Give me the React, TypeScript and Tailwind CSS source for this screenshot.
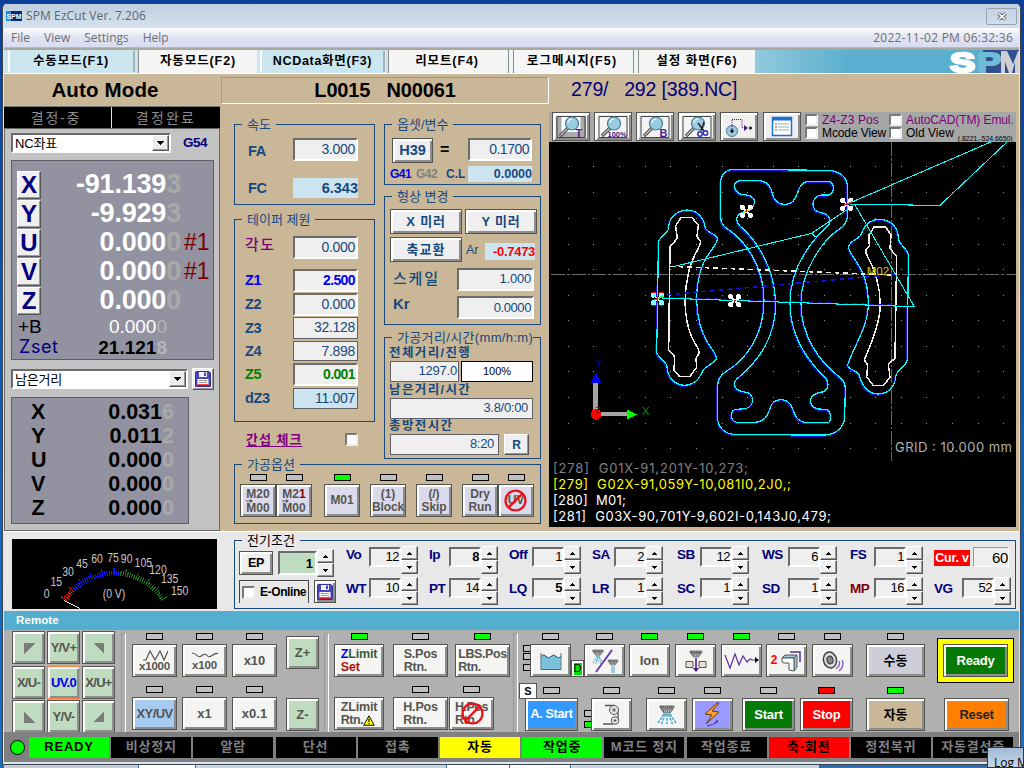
import React from "react";

type Kids = { children?: React.ReactNode; className?: string };

const bevel = "border border-[#55554f] shadow-[inset_2px_2px_0_#fff,inset_-2px_-2px_0_#8d8d8d]";
const sunken = "border-2 border-t-[#6b6b6b] border-l-[#6b6b6b] border-r-white border-b-white";
const flat = "border border-[#606066]";
const raised = "border border-t-white border-l-white border-r-[#555] border-b-[#555] shadow-[inset_-1px_-1px_0_#999]";

function Btn({ children, className = "" }: Kids) {
  return <div className={`flex shrink-0 items-center justify-center overflow-hidden ${bevel} ${className}`}>{children}</div>;
}

function Led({ className = "bg-[#c0c0c0]" }: { className?: string }) {
  return <div className={`h-[7px] w-[17px] shrink-0 border border-black ${className}`} />;
}

function Val({ children, className = "" }: Kids) {
  return <div className={`flex shrink-0 items-center justify-end ${className}`}>{children}</div>;
}

function Group({ title, children, className = "", legend = "bg-[#cab797] text-[#17497f]" }: Kids & { title: string; legend?: string }) {
  return (
    <div className={`flex shrink-0 flex-col border border-[#17497f] ${className}`}>
      <div className={`-mt-[9px] ml-[7px] flex h-[17px] shrink-0 items-center self-start px-[5px] text-[13px] ${legend}`}>{title}</div>
      {children}
    </div>
  );
}

function Check({ className = "" }: { className?: string }) {
  return <div className={`h-[13px] w-[13px] shrink-0 border-2 border-t-[#777] border-l-[#777] border-r-[#eee] border-b-[#eee] bg-white ${className}`} />;
}

function Spinner() {
  return (
    <div className="flex h-[28px] w-[17px] shrink-0 flex-col">
      <div className={`flex h-[14px] items-center justify-center bg-[#efefef] ${raised}`}>
        <svg width="5" height="3" shapeRendering="crispEdges"><path d="M0 3h5L2.5 0z" /></svg>
      </div>
      <div className={`flex h-[14px] items-center justify-center bg-[#efefef] ${raised}`}>
        <svg width="5" height="3" shapeRendering="crispEdges"><path d="M0 0h5L2.5 3z" /></svg>
      </div>
    </div>
  );
}

function Disk() {
  return (
    <svg width="16" height="16" viewBox="0 0 16 16">
      <path d="M1 .5h13l1.5 1.5v13.5h-15V1z" fill="#4848b8" stroke="#34348c" />
      <path d="M4 1h8v5H4z" fill="#f2f2fa" /><path d="M9 1.5h2v3.5H9z" fill="#4848b8" />
      <path d="M2.5 8h11v6h-11z" fill="#fff" /><path d="M4 9.5h8M4 11.5h8" stroke="#999" />
      <path d="M2.5 14h11" stroke="#f00" strokeWidth="1.5" />
    </svg>
  );
}

function Select({ text, className = "" }: { text: string; className?: string }) {
  return (
    <div className={`flex h-[20px] shrink-0 items-center justify-between bg-white pl-[2px] text-[13px] ${sunken} ${className}`}>
      <span className="tracking-[-0.2px]">{text}</span>
      <div className={`flex h-[16px] w-[17px] items-center justify-center bg-[#ececec] ${raised}`}>
        <svg width="7" height="4" shapeRendering="crispEdges"><path d="M0 0h7L3.5 4z" /></svg>
      </div>
    </div>
  );
}

function TitleBar() {
  return (
    <div className="flex h-[24px] shrink-0 items-center justify-between bg-linear-to-b from-[#bfcfde] to-[#d5e2ef] pr-[2px] pl-[2px] text-[#5c6570]">
      <div className="flex items-center">
        <svg width="16" height="10" viewBox="0 0 16 10">
          <path d="M0 0h5v10H0z" fill="#1b8fe0" /><path d="M5 0h11v10H5z" fill="#08287c" />
          <text x="0.5" y="8" fontSize="8" fontWeight="700" fill="#fff" textLength="15" lengthAdjust="spacingAndGlyphs">SPM</text>
        </svg>
        <span className="ml-[4px] font-['Open_Sans',sans-serif] text-[12px] tracking-[0.1px]">SPM EzCut Ver. 7.206</span>
      </div>
      <div className="flex h-[17px] w-[31px] items-center justify-center rounded-[2px] border border-[#98a4b2]">
        <svg width="12" height="9" viewBox="0 0 12 9">
          <path d="M2.5 1.5l7 6M9.5 1.5l-7 6" stroke="#555a63" strokeWidth="3.6" />
          <path d="M2.7 1.7l6.6 5.6M9.3 1.7L2.7 7.3" stroke="#fff" strokeWidth="1.6" />
        </svg>
      </div>
    </div>
  );
}

function Tabs() {
  return (
    <div className="flex h-[26px] shrink-0 border-t-2 border-b border-t-[#a8a8a0] border-b-white bg-[#eef5f7] text-[12.5px] font-bold text-black">
      <div className="flex w-[134px] items-center justify-center bg-[#cce6ef]">
        <div className="flex h-[21px] w-[127px] items-center justify-center border-x-2 border-l-white border-r-[#a6b4b8]">
          <span className="tracking-[0.9px]">수동모드(F1)</span>
        </div>
      </div>
      <div className="flex w-[116px] items-center justify-center border-l border-[#8a8a8a] bg-[#f5f5f5] pl-[3px] tracking-[0.9px]">자동모드(F2)</div>
      <div className="ml-[3px] flex w-[131px] items-center justify-center bg-[#cce6ef]">
        <div className="flex h-[21px] w-[125px] items-center justify-center border-x-2 border-l-white border-r-[#a6b4b8]">
          <span className="tracking-[0.7px]">NCData화면(F3)</span>
        </div>
      </div>
      <div className="flex w-[117px] items-center justify-center border-l border-[#8a8a8a] bg-[#f5f5f5] tracking-[0.9px]">리모트(F4)</div>
      <div className="ml-[3px] w-[4px] border-l border-[#8a8a8a]" />
      <div className="ml-px flex w-[117px] items-center justify-center border-l border-[#8a8a8a] bg-[#f5f5f5] tracking-[1.1px]">로그메시지(F5)</div>
      <div className="ml-[3px] w-[4px] border-l border-[#8a8a8a]" />
      <div className="ml-px flex w-[117px] items-center justify-center border-l border-[#8a8a8a] bg-[#f5f5f5] tracking-[1px]">설정 화면(F6)</div>
      <div className="flex flex-1 justify-end overflow-hidden bg-linear-to-r from-[#92c9dd] via-[#5bafce] via-35% to-[#5bafce]">
        <svg width="70" height="23" viewBox="949 50 70 23">
          <path d="M983 50h40v23h-46l8-8z" fill="#2f4f8e" />
          <text x="950" y="71.5" fontSize="27" fontWeight="900" fill="#fff" stroke="#fff" strokeWidth="2.4" textLength="25" lengthAdjust="spacingAndGlyphs">S</text>
          <text x="977" y="71.500" fontSize="27" fontWeight="900" fill="#6fbbd8" stroke="#6fbbd8" strokeWidth="2" textLength="24" lengthAdjust="spacingAndGlyphs">P</text>
          <path d="M1001 73V51h6l6 13 5-13h2v22h-5V62l-3 11h-3l-4-11v11z" fill="#cfcfd4" />
        </svg>
      </div>
    </div>
  );
}

const axes = [
  ["X", "-91.139", "3", ""],
  ["Y", "-9.929", "3", ""],
  ["U", "0.000", "0", "#1"],
  ["V", "0.000", "0", "#1"],
  ["Z", "0.000", "0", ""],
];
const remains = [["X", "0.031", "6"], ["Y", "0.011", "2"], ["U", "0.000", "0"], ["V", "0.000", "0"], ["Z", "0.000", "0"]];

function LeftColumn() {
  return (
    <div className="flex w-[216px] shrink-0 flex-col">
      <div className="flex h-[32px] shrink-0 items-center justify-center pr-[14px] text-[20.5px] font-bold tracking-[0.15px]">Auto Mode</div>
      <div className="flex h-[22px] shrink-0 gap-px border-t border-[#777] bg-[#ddd] text-[14px] text-[#8c8c8c]">
        <div className="flex w-[107px] items-center justify-center bg-black pr-[3px] tracking-[1.8px]">결정-중</div>
        <div className="flex flex-1 items-center justify-center bg-black tracking-[2.2px]">결정완료</div>
      </div>
      <div className="flex h-[403px] shrink-0 flex-col border border-[#666] bg-[#c3c3c3] pl-[6px]">
        <div className="mt-[4px] flex h-[20px] shrink-0 items-center">
          <Select text="NC좌표" className="w-[160px]" />
          <span className="ml-[12px] text-[13.5px] font-bold tracking-[-0.5px] text-[#00007f]">G54</span>
        </div>
        <div className="mt-[7px] flex h-[200px] w-[203px] shrink-0 flex-col border border-[#5c5c64] bg-[#9292a1] pt-[9px]">
          {axes.map(([n, v, d, s]) => (
            <div key={n} className="flex h-[29px] shrink-0 items-center">
              <div className={`ml-[5px] flex h-[28px] w-[24px] shrink-0 items-center justify-center bg-[#efefef] pt-px text-[24px] font-bold text-[#00007f] ${raised}`}>{n}</div>
              <span className="w-[140px] text-right text-[27px] font-bold tracking-[-0.2px] text-white">
                {v}<span className="text-[#a9a9a9]">{d}</span>
              </span>
              <span className="ml-[3px] text-[23px] text-[#7f0000]">{s}</span>
            </div>
          ))}
          <div className="mt-px flex h-[21px] items-center pl-[6px] text-[19px]">
            <span>+B</span>
            <span className="ml-auto pr-[46px] text-white">0.000<span className="text-[#b5b5b9]">0</span></span>
          </div>
          <div className="flex h-[20px] items-center pl-[7px] text-[19px]">
            <span className="font-['Inter',sans-serif] text-[18px] tracking-[0.6px] text-[#00007f]">Zset</span>
            <span className="ml-auto pr-[46px] font-bold">21.121<span className="text-[#b5b5b9]">8</span></span>
          </div>
        </div>
        <div className="mt-[8px] flex h-[22px] shrink-0 items-center">
          <Select text="남은거리" className="w-[177px]" />
          <div className={`ml-[4px] flex h-[22px] w-[22px] items-center justify-center bg-[#efefef] ${raised}`}><Disk /></div>
        </div>
        <div className="mt-[7px] flex h-[127px] w-[178px] shrink-0 flex-col border border-[#5c5c64] bg-[#9292a1] pt-[3px]">
          {remains.map(([n, v, d]) => (
            <div key={n} className="flex h-[24px] shrink-0 items-center justify-between pr-[14px] pl-[19px] text-[21.500px] font-bold">
              <span className="w-[14px] text-center">{n}</span>
              <span>{v}<span className="text-[#a9a9a9]">{d}</span></span>
            </div>
          ))}
        </div>
      </div>
    </div>
  );
}

function TaperRow({ label, value, row, field, color = "text-[#17497f]" }: { label: string; value: string; row: string; field: string; color?: string }) {
  return (
    <div className={`flex shrink-0 items-center ${row} ${color}`}>
      <span className="ml-[10px] w-[48px] text-[14.5px] font-bold tracking-[-0.3px]">{label}</span>
      <Val className={`h-full w-[65px] text-[14px] tracking-[-0.3px] ${field}`}>{value}</Val>
    </div>
  );
}

function Opt({ led, children, className = "" }: Kids & { led?: string }) {
  return (
    <div className="flex shrink-0 flex-col items-center">
      <Led className={led} />
      <Btn className={`mt-[3px] h-[33px] w-[36px] bg-[#dadaec] text-center text-[12px] leading-[13px] font-bold tracking-[-0.1px] text-[#55554f] ${className}`}>{children}</Btn>
    </div>
  );
}

function MSwap({ children }: Kids) {
  return (
    <span className="flex flex-col items-start text-[12px] leading-[10px] tracking-[0px]">
      <span>{children}</span>
      <svg width="8" height="4" viewBox="0 0 8 4"><path d="M0 2h5" stroke="#55554f" /><path d="M4 0l3 2-3 2z" fill="#55554f" /></svg>
      <span>M00</span>
    </span>
  );
}

function Ban({ size }: { size: number }) {
  return (
    <svg width={size} height={size} viewBox="0 0 24 24" fill="none" stroke="#e8141c" strokeWidth="2.4">
      <circle cx="12" cy="12" r="10.4" /><path d="M4.8 19.2L19.2 4.8" />
    </svg>
  );
}

function Params() {
  return (
    <div className="flex w-[329px] shrink-0 flex-col pl-[14px]">
      <div className="mt-[19px] flex h-[335px] shrink-0">
        <div className="flex w-[141px] shrink-0 flex-col">
          <Group title="속도" className="h-[81px]">
            <div className="mt-[5px] flex h-[23px] items-center text-[#17497f]">
              <span className="ml-[13px] w-[45px] pt-[3px] text-[14.5px] font-bold tracking-[-0.3px]">FA</span>
              <Val className={`h-full w-[65px] bg-[#efefef] pr-[1px] pb-[2px] text-[14px] tracking-[-0.3px] ${sunken}`}>3.000</Val>
            </div>
            <div className="mt-[17px] flex h-[20px] items-center text-[#17497f]">
              <span className="ml-[13px] w-[45px] text-[14.5px] font-bold tracking-[-0.3px]">FC</span>
              <Val className="h-full w-[65px] bg-[#cde5f0] text-[14.500px] font-bold">6.343</Val>
            </div>
          </Group>
          <Group title="테이퍼 제원" className="mt-[14px] h-[203px]">
            <div className="mt-[8px] flex h-[23px] shrink-0 items-center">
              <span className="ml-[10px] w-[48px] pb-[6px] text-[15px] font-medium tracking-[1.5px] text-[#7f007f]">각도</span>
              <Val className={`h-full w-[65px] bg-[#efefef] pr-[1px] pb-[2px] text-[14px] tracking-[-0.3px] text-[#17497f] ${sunken}`}>0.000</Val>
            </div>
            <TaperRow label="Z1" value="2.500" row="mt-[10px] h-[23px]" field={`bg-[#efefef] pr-[1px] pb-[2px] font-bold tracking-[-0.6px]! ${sunken}`} color="text-[#0000f0]" />
            <TaperRow label="Z2" value="0.000" row="mt-px h-[23px]" field={`bg-[#efefef] pr-[1px] pb-[2px] ${sunken}`} />
            <TaperRow label="Z3" value="32.128" row="mt-px h-[22px]" field={`bg-[#efefef] pr-[2px] pb-[2px] ${flat}`} />
            <TaperRow label="Z4" value="7.898" row="mt-[2px] h-[20px]" field={`bg-[#efefef] pr-[2px] pb-px ${flat}`} />
            <TaperRow label="Z5" value="0.001" row="mt-[2px] h-[23px]" field={`bg-[#efefef] pr-[1px] pb-px font-bold tracking-[-0.6px]! ${sunken}`} color="text-[#007f00]" />
            <TaperRow label="dZ3" value="11.007" row="mt-[2px] h-[21px]" field={`bg-[#cde5f0] pr-[2px] pb-px ${flat}`} />
          </Group>
          <div className="mt-[9px] flex h-[16px] items-center justify-between pr-[17px] pl-[12px]">
            <span className="text-[13px] font-bold tracking-[1px] text-[#7f007f] underline underline-offset-[2px]">간섭 체크</span>
            <Check />
          </div>
        </div>
        <div className="ml-[9px] flex w-[157px] shrink-0 flex-col text-[#17497f]">
          <Group title="옵셋/변수" className="h-[61px]">
            <div className="mt-[5px] flex h-[25px] shrink-0 items-start">
              <Btn className="ml-[7px] h-[25px] w-[41px] bg-[#efefef] text-[14.500px] font-bold">H39</Btn>
              <span className="ml-[7px] w-[28px] pt-[4px] text-[16px] font-bold text-black">=</span>
              <Val className={`h-[23px] w-[64px] bg-[#efefef] pr-[1px] pb-[2px] text-[14px] tracking-[-0.500px] ${sunken}`}>0.1700</Val>
            </div>
            <div className="mt-[3px] flex h-[16px] shrink-0 items-center pl-[5px] text-[12px] font-bold">
              <span className="w-[26px] tracking-[-0.5px] text-[#0000f0]">G41</span>
              <span className="w-[30px] tracking-[-0.5px] text-[#808080]">G42</span>
              <span className="w-[22px]">C.L</span>
              <Val className="h-full w-[64px] bg-[#cde5f0] text-[12.5px]">0.0000</Val>
            </div>
          </Group>
          <Group title="형상 변경" className="mt-[11px] h-[129px]">
            <div className="mt-[4px] flex h-[25px] shrink-0 gap-[3px] pl-[5px]">
              <Btn className="h-[25px] w-[72px] bg-[#efefef] pb-px text-[13px] font-bold tracking-[0.8px]">X 미러</Btn>
              <Btn className="h-[25px] w-[72px] bg-[#efefef] pb-px text-[13px] font-bold tracking-[0.8px]">Y 미러</Btn>
            </div>
            <div className="mt-[3px] flex h-[25px] shrink-0 items-center pl-[5px]">
              <Btn className="h-[25px] w-[72px] bg-[#efefef] pb-px text-[13px] font-bold tracking-[1px]">축교환</Btn>
              <span className="ml-[4px] w-[19px] pt-[2px] text-[12.500px]">Ar</span>
              <Val className="mt-[3px] h-[17px] w-[50px] bg-[#cde5f0] text-[13px] font-bold tracking-[-0.3px] text-[#f00]">-0.7473</Val>
            </div>
            <div className="mt-[6px] flex h-[23px] shrink-0 items-center">
              <span className="ml-[8px] w-[64px] pb-[3px] text-[15px] font-medium tracking-[1.800px]">스케일</span>
              <Val className={`h-full w-[77px] bg-[#efefef] pr-[1px] pb-[2px] text-[13px] tracking-[-0.2px] ${sunken}`}>1.000</Val>
            </div>
            <div className="mt-[5px] flex h-[23px] shrink-0 items-center">
              <span className="ml-[8px] w-[64px] pb-[8px] text-[15px] font-bold">Kr</span>
              <Val className={`h-full w-[77px] bg-[#efefef] pr-[1px] pb-[1px] text-[13px] tracking-[-0.4px] ${sunken}`}>0.0000</Val>
            </div>
          </Group>
          <Group title="가공거리/시간(mm/h:m)" className="mt-[12px] h-[122px]" legend="bg-[#cab797] text-[#17497f] pr-0 tracking-[0.35px]">
            <div className="flex h-[15px] shrink-0 items-center pl-[4px] text-[12.500px] font-bold tracking-[1.400px]">전체거리/진행</div>
            <div className="flex h-[21px] shrink-0 gap-[2px] pl-[5px]">
              <Val className={`w-[69px] bg-[#efefef] pr-px pb-[2px] text-[13px] tracking-[-0.2px] ${flat}`}>1297.0</Val>
              <div className="flex w-[72px] items-center justify-center border border-black bg-white text-[11px] text-black">100%</div>
            </div>
            <div className="flex h-[16px] shrink-0 items-center pl-[4px] text-[12.500px] font-bold tracking-[1.400px]">남은거리/시간</div>
            <div className="flex h-[21px] shrink-0 pl-[5px]">
              <Val className={`w-[143px] bg-[#efefef] pr-[4px] pb-[2px] text-[13px] tracking-[-0.3px] ${flat}`}>3.8/0:00</Val>
            </div>
            <div className="flex h-[15px] shrink-0 items-center pl-[4px] text-[12.500px] font-bold tracking-[1.400px]">총방전시간</div>
            <div className="flex h-[21px] shrink-0 pl-[5px]">
              <Val className={`w-[109px] bg-[#efefef] pr-[4px] pb-[2px] text-[13px] tracking-[-0.3px] ${flat}`}>8:20</Val>
              <div className={`ml-[5px] flex w-[25px] items-center justify-center bg-[#efefef] text-[12px] font-bold ${raised}`}>R</div>
            </div>
          </Group>
        </div>
      </div>
      <Group title="가공옵션" className="mt-[5px] h-[60px] w-[307px]">
        <div className="mt-px flex pl-[5px]">
          <Opt><MSwap>M20</MSwap></Opt>
          <Opt><MSwap>M2<span className="text-[#7f0000]">1</span></MSwap></Opt>
          <div className="w-[12px]" />
          <Opt led="bg-[#00ff00]">M01</Opt>
          <div className="w-[10px]" />
          <Opt>(1)<br />Block</Opt>
          <div className="w-[10px]" />
          <Opt>(/)<br />Skip</Opt>
          <div className="w-[10px]" />
          <Opt className="border-[#46128a]">Dry<br />Run</Opt>
          <Opt className="border-[#46128a]">
            <span className="relative flex items-center justify-center text-[12px]">UV<span className="absolute"><Ban size={23} /></span></span>
          </Opt>
        </div>
      </Group>
    </div>
  );
}

function Lens({ kind }: { kind: string }) {
  return (
    <svg width="30" height="24" viewBox="0 0 30 24">
      <path d="M1 1.5h28v21H1z" fill={kind === "T" ? "#fff" : "#f4f4f4"} stroke="#444" />
      {kind === "T" && <path d="M1.500 2h4v20h-4zM24.500 2h4v20h-4zM5 17h20v5H5z" fill="#aaa" />}
      {kind === "T" && <path d="M1 1.500h28v21H1z" fill="none" stroke="#444" />}
      <path d="M12 13L4 21" stroke="#444" strokeWidth="3.200" /><path d="M12 13L4.500 20.500" stroke="#ccc" strokeWidth="1.200" />
      <circle cx="16" cy="8.500" r="6.500" fill="#9bcbe0" stroke="#3f7d98" strokeWidth="1.200" />
      <path d="M12 8a4 4 0 0 1 4-4" stroke="#e6f5fb" fill="none" strokeWidth="1.500" />
      {kind === "scissors" ? (
        <g fill="none" stroke="#222" strokeWidth="1.400">
          <path d="M16 8l6 8M22 7l-3 9" /><circle cx="18" cy="19" r="2.200" stroke="#2a2ac0" /><circle cx="23.500" cy="18" r="2.200" stroke="#2a2ac0" />
        </g>
      ) : (
        <text x={kind === "100%" ? 9.5 : 19.5} y="21.800" fontSize={kind === "100%" ? 7.5 : 11} fontWeight="700" fill="#4a1d8c">{kind}</text>
      )}
    </svg>
  );
}

function ViewTools() {
  const b = "h-[29px] w-[38px] bg-[#efefef]";
  return (
    <div className="flex h-[30px] shrink-0 gap-[4px] bg-[#a6a6a6] pl-[3px]">
      <Btn className={b}><Lens kind="T" /></Btn>
      <Btn className={b}><Lens kind="100%" /></Btn>
      <Btn className={b}><Lens kind="B" /></Btn>
      <Btn className={b}><Lens kind="scissors" /></Btn>
      <Btn className={b}>
        <svg width="30" height="24" viewBox="0 0 30 24" fill="none">
          <circle cx="8" cy="16" r="5.500" fill="#9bcbe0" stroke="#4a7f95" /><path d="M8 5v13" stroke="#46128a" strokeDasharray="1 1" /><circle cx="8" cy="16" r="1.700" fill="#111" />
          <path d="M8 4.500h10v8h3" stroke="#46128a" strokeDasharray="1 1" /><path d="M20 10l4 3-4 3z" fill="#46128a" /><circle cx="26.500" cy="13" r="1.500" fill="#111" />
        </svg>
      </Btn>
      <Btn className="ml-px h-[29px] w-[38px] bg-[#efefef]">
        <svg width="22" height="22" viewBox="0 0 22 22">
          <path d="M1.500 1.500h19v18h-19z" fill="#fff" stroke="#1b6fd0" strokeWidth="1.500" /><path d="M1 1h20v3.500H1z" fill="#1b6fd0" />
          <path d="M4 8h2M4 11h2M4 14h2" stroke="#555" /><path d="M7 8h11M7 11h11M7 14h11" stroke="#9aa" />
        </svg>
      </Btn>
      <div className="flex flex-col pt-px text-[12px]">
        <div className="flex h-[13px] items-center">
          <Check className="h-[12px]!" /><span className="ml-[4px] w-[67px] tracking-[0.1px] text-[#7f007f]">Z4-Z3 Pos</span>
          <Check className="h-[12px]!" /><span className="ml-[4px] tracking-[-0.1px] text-[#7f007f]">AutoCAD(TM) Emul.</span>
        </div>
        <div className="flex h-[13px] items-center">
          <Check className="h-[12px]!" /><span className="ml-[4px] w-[67px] tracking-[-0.1px]">Mcode View</span>
          <Check className="h-[12px]!" /><span className="ml-[4px]">Old View</span>
          <span className="mt-[11px] ml-[4px] text-[7px] tracking-[-0.05px]">(.8221,-524.6650)</span>
        </div>
      </div>
    </div>
  );
}

const gx = [70, 146, 223, 301, 376, 454, 532, 607, 685, 760, 838, 916, 992, 1069, 1145, 1222, 1300, 1375];
const gy = [79, 157, 235, 312, 388, 466, 541, 619, 693, 772, 850, 925];

const contours = [
  "M565 88L850 91C885 93 907 112 907 140L907 232C905 250 895 260 880 269C835 300 768 390 768 490C768 590 825 665 880 708C895 718 901 730 901 745L899 835C895 865 870 884 840 885L740 885L740 883L565 883C538 880 518 862 518 832L518 738C518 718 530 702 545 693C600 660 657 590 657 480C657 380 600 300 548 267C535 258 527 250 527 232L527 130C527 105 540 90 565 88Z",
  "M585 122L640 122C665 122 678 140 682 160C688 185 700 193 717 193C742 193 750 180 757 160C765 135 775 124 795 124L850 124C870 128 870 160 850 165L828 165C798 170 795 212 825 217C850 222 860 235 853 252C790 310 735 390 735 490C735 590 790 665 843 715C855 735 848 756 825 757C788 765 788 800 820 807L845 808C860 815 860 845 848 848L785 848C757 845 748 825 742 805C735 785 722 779 708 779C692 779 680 788 675 805C668 830 655 845 632 847L575 847C555 842 555 812 572 808L600 806C630 800 630 760 600 756C572 753 560 735 574 718C645 660 692 590 692 490C690 380 630 295 585 258C568 240 575 222 597 215C635 205 640 170 605 165L585 162C565 152 562 125 585 122Z",
  "M425 210C390 212 370 238 370 268C366 282 343 290 340 308L338 480L335 635C337 655 363 660 366 680C368 715 390 735 420 736C455 733 465 710 475 690C480 680 500 675 513 658C520 645 490 615 484 600C450 540 445 440 475 370C495 330 515 315 517 298C518 290 510 285 500 280C475 265 483 265 478 250C470 225 450 210 425 210Z",
  "M1003 238C970 240 958 258 950 280C945 298 912 300 911 322C912 350 970 380 970 490C970 560 930 610 908 675C910 692 945 690 945 712C955 745 975 762 1000 762C1035 760 1052 735 1053 705C1055 690 1085 680 1087 658L1090 345C1088 325 1065 318 1060 295C1060 265 1040 238 1003 238Z",
];
const electrodes = [
  "M408 232L440 232L460 255L456 290L467 305C465 325 440 350 430 400C412 480 420 560 450 610C457 620 463 630 462 640L453 655L455 682L435 709L403 709L387 690L389 650L371 630L375 320L397 295L392 258Z",
  "M987 261L1022 261L1038 285L1035 325L1055 350L1050 655L1030 672L1035 712L1015 737L985 737L965 710L968 675L958 660C965 640 1000 570 1005 510C1010 430 980 370 963 340L963 330L973 318L972 285Z",
];

function Marker({ x, y, fill, core }: { x: number; y: number; fill: string; core: string }) {
  return (
    <g transform={`translate(${x} ${y})`}>
      <path d="M-14 -14L14 14M14 -14L-14 14" stroke="#fff" strokeWidth="5" />
      {[[-12, -12], [12, -12], [-12, 12], [12, 12]].map(([a, b]) => (
        <circle key={`${a}${b}`} cx={a} cy={b} r="8" fill={fill} />
      ))}
      <path d="M-8 3L5 -2L16 -8" stroke={core} strokeWidth="4" fill="none" />
      <circle r="3" fill="#f00" />
    </g>
  );
}

function PathView() {
  return (
    <svg className="shrink-0 bg-black" width="467" height="385" viewBox="549 142 467 385" fill="none">
      <g transform="translate(545 140) scale(0.33333)" shapeRendering="crispEdges">
        {gy.map((y) => gx.map((x) => <path key={`${x}-${y}`} d={`M${x - 1} ${y - 1}h3v3h-3z`} fill="#9a9a9a" />))}
        <path d="M1040 6V962M18 404H1413" stroke="#6a6a6a" strokeWidth="4" strokeDasharray="42 6 8 6" />
        {contours.map((d) => <path key={d} d={d} stroke="#1414d8" strokeWidth="4" transform="translate(-2 3)" />)}
        {contours.map((d) => <path key={d} d={d} stroke="#00ffff" strokeWidth="3.600" />)}
        {electrodes.map((d) => <path key={d} d={d} stroke="#f2ece4" strokeWidth="4.500" />)}
        <path d="M340 467L1050 403M350 472L1108 498" stroke="#1414e0" strokeWidth="4.500" strokeDasharray="14 12" />
        <path d="M375 379L1045 405" stroke="#f4f0e8" strokeWidth="4.500" strokeDasharray="14 12" />
        <path d="M905 193L1340 5M915 193L1185 196L1387 5M930 195L1108 500L350 474M905 210L800 280L385 380M800 280L812 292" stroke="#00ffff" strokeWidth="3.200" />
        <text x="965" y="406" fontSize="32" fill="#d2c800" textLength="68" lengthAdjust="spacingAndGlyphs">M02</text>
        <Marker x={604} y={214} fill="#fff" core="#ffe000" />
        <Marker x={905} y={193} fill="#fff" core="#ff3020" />
        <Marker x={337} y={477} fill="#7ff" core="#20e020" />
        <path d="M322 458h12m8 0h12M322 496h10m12 0h10M337 468v22" stroke="#f00" strokeWidth="4" />
        <Marker x={569} y={482} fill="#fff" core="#fff" />
        <path d="M152 823V726M153 823H250" stroke="#a4a4a4" strokeWidth="13" />
        <path d="M137 728L152 698L167 728Z" fill="#0000ff" /><path d="M246 808L276 823L246 838Z" fill="#00ff00" />
        <circle cx="153" cy="823" r="16" fill="#ff0000" />
        <text x="151" y="682" fontSize="33" fill="#0a0a90">Y</text>
        <text x="291" y="824" fontSize="34" fill="#0b8a0b">X</text>
        <text x="151" y="820" fontSize="26" fill="#8c0000">Z</text>
      </g>
      <g fontFamily="Inter, sans-serif" fontSize="13" fontWeight="400">
        <text x="895" y="452" fill="#b0b0b0" textLength="117">GRID : 10.000 mm</text>
        <text x="553" y="473" fill="#808080" textLength="195">[278]&#160; G01X-91,201Y-10,273;</text>
        <text x="553" y="489" fill="#ffff00" textLength="238">[279]&#160; G02X-91,059Y-10,081I0,2J0,;</text>
        <text x="553" y="505" fill="#fff" textLength="73">[280]&#160; M01;</text>
        <text x="553" y="521" fill="#fff" textLength="278">[281]&#160; G03X-90,701Y-9,602I-0,143J0,479;</text>
      </g>
    </svg>
  );
}

const marks: [string, number, number][] = [
  ["0", 140, 683], ["15", 169, 647], ["30", 204, 616], ["45", 246, 594], ["60", 291, 578], ["75", 339, 576],
  ["90", 380, 578], ["105", 430, 589], ["120", 474, 611], ["135", 509, 638], ["150", 539, 675],
];

function Gauge() {
  return (
    <svg className="mt-[7px] ml-[8px] shrink-0 bg-black" width="205" height="70" viewBox="12 538 205 70">
      <g transform="translate(0 365) scale(0.33333)">
        {Array.from({ length: 51 }, (_, i) => {
          const a = ((i / 50) * 114 - 57) * (Math.PI / 180);
          const r = i % 5 === 0 ? 190 : 181;
          return (
            <path key={i} d={`M${342 + 167 * Math.sin(a)} ${795 - 167 * Math.cos(a)}L${342 + r * Math.sin(a)} ${795 - r * Math.cos(a)}`}
              shapeRendering="crispEdges" stroke={i < 6 ? "#ff1010" : i < 28 ? "#1414ff" : "#0a800a"} strokeWidth="3.200" />
          );
        })}
        <path d="M192 703L240 728" stroke="#e8e8e8" strokeWidth="3" shapeRendering="crispEdges" />
        <g fill="#c8c8c8" fontSize="36" textAnchor="middle">
          {marks.map(([t, x, y]) => (
            <text key={t} x={x} y={y + 13} textLength={t.length * 17.5} lengthAdjust="spacingAndGlyphs">{t}</text>
          ))}
          <text x="342" y="695" textLength="68" lengthAdjust="spacingAndGlyphs">(0 V)</text>
        </g>
      </g>
    </svg>
  );
}

const cond: [string, string, string, string][] = [
  ["Vo", "12", "w-[23px]", ""], ["Ip", "8", "w-[20px]", "font-bold"], ["Off", "1", "w-[23px]", ""], ["SA", "2", "w-[22px]", ""],
  ["SB", "12", "w-[23px]", ""], ["WS", "6", "w-[26px]", ""], ["FS", "1", "w-[24px]", ""],
];
const cond2: [string, string, string, string][] = [
  ["WT", "10", "w-[23px]", ""], ["PT", "14", "w-[20px]", ""], ["LQ", "5", "w-[23px]", "font-bold"], ["LR", "1", "w-[22px]", ""],
  ["SC", "1", "w-[23px]", ""], ["SD", "1", "w-[26px]", ""], ["MP", "16", "w-[24px]", ""], ["VG", "52", "w-[28px]", ""],
];

function Cond({ c }: { c: [string, string, string, string] }) {
  return (
    <div className="flex h-[28px] items-start">
      <span className={`flex shrink-0 pt-[2px] text-[13.500px] font-bold tracking-[-0.400px] ${c[2]} ${c[0] === "MP" ? "text-[#7f0000]" : "text-[#00007f]"} ${cond2.includes(c) ? "mt-[3px]" : ""}`}>{c[0]}</span>
      <Val className={`mt-px h-[20px] w-[32px] bg-[#efefef] pb-[2px] text-[13px] tracking-[-0.5px] ${sunken} ${c[3]}`}>{c[1]}</Val>
      <Spinner />
    </div>
  );
}

function Electrical() {
  return (
    <div className="flex h-[81px] shrink-0 border-t border-b border-t-white border-b-[#999] bg-[#e8e8e8]">
      <Gauge />
      <Group title="전기조건" className="mt-[8px] ml-[17px] h-[69px] w-[782px]" legend="bg-[#e8e8e8] text-black">
        <div className="flex h-[58px]">
          <div className="flex w-[111px] shrink-0 flex-col pl-[4px]">
            <div className="flex h-[28px] items-center">
              <Btn className="h-[24px] w-[34px] bg-[#efefef] text-[12.500px] font-bold tracking-[-0.3px]">EP</Btn>
              <Val className={`ml-[5px] h-[24px] w-[39px] bg-[#c0dcc0] pr-[2px] text-[13px] font-bold ${sunken}`}>1</Val>
              <Spinner />
            </div>
            <div className="mt-[3px] flex h-[23px]">
              <div className="flex w-[70px] items-center border-x border-t border-[#444] pl-[2px] text-[12px] font-bold tracking-[-0.4px]">
                <Check /><span className="ml-[5px]">E-Online</span>
              </div>
              <Btn className="ml-[5px] h-[23px] w-[22px] bg-[#efefef]"><Disk /></Btn>
            </div>
          </div>
          <div className="-mt-[3px] grid auto-rows-[28px] grid-cols-[83px_80px_83px_85px_85px_88px_84px_80px] content-start gap-y-[3px]">
            {cond.map((c) => <Cond key={c[0]} c={c} />)}
            <div className="flex h-[28px] items-start">
              <div className="mt-[4px] flex h-[16px] w-[36px] items-center justify-center bg-[#f00] text-[12.500px] font-bold tracking-[-0.2px] text-white">Cur. v</div>
              <Val className="mt-px ml-[3px] h-[20px] w-[36px] border border-t-[#999] border-l-[#999] border-r-white border-b-white bg-[#efefef] text-[15px] tracking-[-0.3px]">60</Val>
            </div>
            {cond2.map((c) => <Cond key={c[0]} c={c} />)}
          </div>
        </div>
      </Group>
    </div>
  );
}

function Jog({ children, className = "" }: Kids) {
  return <Btn className={`h-[33px] w-[33px] bg-[#c0dcc0] text-[13px] font-bold tracking-[-0.7px] text-[#55554f] ${className}`}>{children}</Btn>;
}

function Tri({ d }: { d: string }) {
  return <svg width="12" height="12" shapeRendering="crispEdges"><path d={d} fill="#7c7c7c" /></svg>;
}

function Unit({ led, children, className = "", cell = "" }: Kids & { led?: string | null; cell?: string }) {
  return (
    <div className={`flex shrink-0 flex-col items-center ${cell}`}>
      {led === null ? <div className="h-[7px]" /> : <Led className={led} />}
      <Btn className={`mt-[4px] h-[33px] text-[13px] leading-[13px] font-bold text-[#55554f] ${className}`}>{children}</Btn>
    </div>
  );
}

const white = "bg-[#f4f4f2]";
const Split = () => <div className="mt-[3px] h-[99px] w-[5px] shrink-0 border-x border-t border-l-[#999] border-r-white border-t-[#999]" />;

function Nozzle({ y = 0 }: { y?: number }) {
  return (
    <g transform={`translate(0 ${y})`}>
      <path d="M-7 0h14v2h-14zM-6 3h12l-3 4h-6z" fill="#bbb" stroke="#444" strokeWidth=".8" /><path d="M-6 1h12M-4 5h8" stroke="#333" strokeDasharray="1 1" />
    </g>
  );
}

function Machine() {
  const w41 = "w-[41px]";
  return (
    <div className="flex flex-col">
      <div className="mt-[3px] flex h-[50px] items-start">
        <div className="mt-[12px] ml-[5px] flex flex-col">
          <div className="h-[7px] w-[7px] border border-r-0 border-black bg-[#c0c0c0]" />
          <div className="mt-px h-[7px] w-[7px] border border-r-0 border-black bg-[#c0c0c0]" />
          <div className="mt-[4px] h-[7px] w-[7px] border border-r-0 border-black bg-[#c0c0c0]" />
        </div>
        <Unit className={`${white} ${w41}`}>
          <svg width="22" height="18" viewBox="0 0 22 18"><path d="M1.500 4q2.500-3 5 0t5 0 5 0 4 0V17h-19z" fill="#7cc0dc" /><path d="M1 1v16.500h20V1" fill="none" stroke="#3a6f88" /><path d="M1 4.500q2.500-3 5 0t5 0 5 0 5 0" stroke="#256080" fill="none" /></svg>
        </Unit>
        <div className="mt-[27px] flex h-[17px] w-[13px] items-center justify-center border border-[#555] bg-white">
          <span className="flex h-[12px] w-[8px] items-center justify-center bg-[#00e000] text-[11px]">D</span>
        </div>
        <Unit className={`${white} ${w41}`}>
          <svg width="30" height="26" viewBox="0 0 30 26">
            <g transform="translate(8 2) scale(.75)"><Nozzle /></g><path d="M7 8l-4 7M9 8l4 7M8 8v7M7.500 9l-2 7M9 9l2 7" stroke="#4aa5cc" strokeDasharray="2 1" />
            <path d="M6 24L22 2" stroke="#6a3cae" strokeWidth="2" /><g transform="translate(23 12) scale(.7)"><Nozzle /></g><path d="M22 18v7M24 18v7" stroke="#4aa5cc" />
          </svg>
        </Unit>
        <Unit cell="ml-[4px]" led="bg-[#00ff00]" className={`${white} ${w41}`}>Ion</Unit>
        <Unit cell="ml-[5px]" led="bg-[#00ff00]" className={`${white} ${w41}`}>
          <svg width="26" height="24" viewBox="0 0 26 24"><g transform="translate(13 2) scale(.85)"><Nozzle /></g><path d="M3 12.500h7v6H3zM16 12.500h7v6h-7z" fill="#e8e0d8" stroke="#555" /><path d="M13 9v12" stroke="#46128a" strokeWidth="1.500" /><path d="M10 19h6l-3 4z" fill="#46128a" /></svg>
        </Unit>
        <Unit cell="ml-[5px]" led="bg-[#00ff00]" className={`${white} border-[#3a7878] ${w41}`}>
          <svg width="36" height="20" viewBox="0 0 36 20" fill="none"><path d="M1 4l5 13 5-14 4 11 4-9 4 6 3-3 2 1h5" stroke="#5a2c9c" strokeWidth="1.200" /><path d="M31 6l4 3-4 3z" fill="#111" /></svg>
        </Unit>
        <Unit cell="ml-[4px]" className={`${white} border-[#3a7878] ${w41}`}>
          <span className="text-[12px] text-[#f00]">2</span>
          <svg className="ml-[3px]" width="22" height="22" viewBox="0 0 22 22" fill="none"><path d="M2 8l3-3h12l-3 3zM14 8l3-3v12l-3 4z" fill="#9fcbd8" stroke="#555" /><path d="M14 8H2v4l2 1h5v7l5 1z" fill="#fff" stroke="#555" /><path d="M10 2h10v10" stroke="#5a2c9c" strokeWidth="1.500" /></svg>
        </Unit>
        <Unit cell="ml-[5px]" className={`${white} border-[#3a7878] ${w41}`}>
          <svg width="26" height="22" viewBox="0 0 26 22" fill="none"><path d="M4 6l6-4v16l-6-3z" fill="#777" /><ellipse cx="10" cy="10" rx="6.500" ry="8" fill="#ddd" stroke="#444" strokeWidth="1.500" transform="rotate(-15 10 10)" /><ellipse cx="10" cy="10" rx="3" ry="4" fill="#888" stroke="#333" transform="rotate(-15 10 10)" /><path d="M19 11q2 4-3 8M22 10q3 6-3 11" stroke="#8a6cc8" strokeWidth="1.500" /></svg>
        </Unit>
        <Unit cell="ml-[13px]" className="w-[59px] bg-[#ceceda] text-black!">수동</Unit>
        <div className="mt-[5px] ml-[12px] flex h-[45px] w-[77px] items-center justify-center border border-black bg-[#ffff00]">
          <Btn className="h-[33px] w-[65px] bg-[#067a06] text-[13px] font-bold tracking-[-0.2px] text-white">Ready</Btn>
        </div>
      </div>
      <div className="flex h-[49px] items-start pl-px">
        <div className="relative z-10 flex h-[16px] w-[18px] shrink-0 items-center justify-center border border-[#555] bg-white text-[11px] font-bold">S</div>
        <Unit cell="mt-[4px] -ml-[12px] w-[53px]" className="w-[53px] border-[#063a06] bg-[#3399ff] text-[12.500px]! tracking-[-0.3px] text-white!">A. Start</Unit>
        <div className="mt-[27px] ml-[6px] flex flex-col">
          <div className="h-[7px] w-[7px] border border-r-0 border-black bg-[#c0c0c0]" />
          <div className="mt-[4px] h-[7px] w-[7px] border border-r-0 border-black bg-[#00ff00]" />
        </div>
        <Unit cell="mt-[4px]" className={`${white} ${w41}`}>
          <svg width="22" height="22" viewBox="0 0 22 22" fill="none" stroke="#555"><path d="M4 1.500h10M2 20h10M17 6v10" strokeWidth="1.300" /><circle cx="13" cy="6" r="4.500" fill="#e4e4e4" /><circle cx="14" cy="16.500" r="3.800" fill="#e4e4e4" /><path d="M13 4v4M11 6h4M14 15v3M12.500 16.500h3" /></svg>
        </Unit>
        <Unit cell="mt-[4px] ml-[14px]" className={`${white} ${w41}`}>
          <svg width="26" height="22" viewBox="0 0 26 22"><g transform="translate(13 2)"><Nozzle /></g><path d="M10 10l-6 9M11.500 10l-4 10M13 10v10M14.500 10l4 10M16 10l6 9" stroke="#4aa5cc" strokeWidth="1.500" strokeDasharray="3 1" /></svg>
        </Unit>
        <Unit cell="mt-[4px] ml-[5px]" className={`bg-[#9999ff] ${w41}`}>
          <svg width="22" height="25" viewBox="0 0 22 25"><path d="M15 1L3 12l7 1-6 9 13-12-7-1 7-8z" fill="#ffa030" stroke="#6b3a10" /><path d="M5 24q6 0 11-6M13 22l3-3" stroke="#4a2c9c" fill="none" /></svg>
        </Unit>
        <Unit cell="mt-[4px] ml-[9px]" className="w-[53px] border-[#063a06] bg-[#067a06] tracking-[-0.2px] text-white!">Start</Unit>
        <Unit cell="mt-[4px] ml-[5px]" led="bg-[#f00]" className="w-[53px] border-[#7f0000] bg-[#ff0000] tracking-[-0.2px] text-white!">Stop</Unit>
        <Unit cell="mt-[4px] ml-[13px]" led="bg-[#00ff00]" className="w-[59px] bg-[#cab797] text-black!">자동</Unit>
        <Unit cell="mt-[4px] ml-[19px]" led={null} className="w-[65px] bg-[#ff8000] tracking-[-0.3px] text-[#222]!">Reset</Unit>
      </div>
    </div>
  );
}

function Remote() {
  return (
    <>
      <div className="flex h-[18px] shrink-0 items-center bg-[#53aed0] pl-[12px] text-[11.5px] font-bold tracking-[0.1px] text-white">Remote</div>
      <div className="flex h-[102px] shrink-0 overflow-hidden bg-[#b0b0b0]">
        <div className="mt-px ml-[8px] grid h-[101px] w-[109px] shrink-0 auto-rows-[34.5px] grid-cols-[35px_35px_35px] content-start">
          <Jog><Tri d="M1 1h11L1 12z" /></Jog><Jog>Y/V+</Jog><Jog><Tri d="M0 1h11v11z" /></Jog>
          <Jog>X/U-</Jog><Jog className="border-[#ff7f40] text-[#0000f0]!">UV.0</Jog><Jog>X/U+</Jog>
          <Jog><Tri d="M1 1v11h11z" /></Jog><Jog>Y/V-</Jog><Jog><Tri d="M11 0v11H0z" /></Jog>
        </div>
        <Split />
        <div className="flex w-[198px] shrink-0">
          <div className="mt-[3px] ml-[6px] grid h-[99px] auto-rows-[53px] grid-cols-[50px_50px_50px] justify-items-start">
            <Unit className={`w-[45px] flex-col text-[11.500px]! leading-[11px]! tracking-[-0.2px] ${white}`}>
              <svg width="26" height="11" viewBox="0 0 26 11" fill="none" stroke="#55554f"><path d="M1 10h3l4-9 5 9 5-9 4 9 4-9" strokeWidth="1.200" /></svg>x1000
            </Unit>
            <Unit className={`w-[45px] flex-col text-[11.500px]! leading-[11px]! tracking-[-0.2px] ${white}`}>
              <svg width="26" height="9" viewBox="0 0 26 9" fill="none" stroke="#55554f"><path d="M0 2q3 0 5 2.500t5 0 5 0 5 0 6-2" strokeWidth="1.200" /></svg>x100
            </Unit>
            <Unit className={`w-[45px] ${white}`}>x10</Unit>
            <Unit className="w-[45px] bg-[#a6caf0] tracking-[-0.600px]">XY/UV</Unit>
            <Unit className={`w-[45px] ${white}`}>x1</Unit>
            <Unit className={`w-[45px] ${white}`}>x0.1</Unit>
          </div>
          <div className="mt-[6px] ml-[4px] flex flex-col gap-[29px]">
            <Jog className="tracking-normal">Z+</Jog><Jog className="tracking-normal">Z-</Jog>
          </div>
        </div>
        <Split />
        <div className="flex w-[184px] shrink-0 flex-col pt-[3px] pl-[5px] tracking-[-0.2px]">
          <div className="flex h-[53px]">
            <Unit led="bg-[#00ff00]" className={`w-[50px] text-[12.500px]! ${white}`}><span className="text-[#3c5c3c]"><span className="text-[#0000f0]">Z</span>Limit<br /><span className="text-[#b01010]">Set</span></span></Unit>
            <Unit cell="ml-[9px]" className={`w-[55px] text-[12.500px]! ${white}`}><span>S.Pos<br />Rtn.</span></Unit>
            <Unit cell="ml-[7px]" led="bg-[#00ff00]" className={`w-[55px] text-[12.500px]! tracking-[-0.4px] ${white}`}><span>LBS.Pos<br />Rtn.</span></Unit>
          </div>
          <div className="flex">
            <Unit led={null} className={`w-[50px] text-[12.500px]! ${white}`}>
              <span>ZLimit<br /><span className="flex items-center tracking-[-0.5px]">Rtn.<svg width="12" height="11" viewBox="0 0 12 11"><path d="M6 .8L11.300 10.300H.7z" fill="#ff0" stroke="#111" /><path d="M6 3.500v3.500M6 8v1.200" stroke="#111" strokeWidth="1.200" /></svg></span></span>
            </Unit>
            <Unit cell="ml-[9px]" className={`w-[55px] text-[12.500px]! ${white}`}><span>H.Pos<br />Rtn.</span></Unit>
            <Unit cell="ml-px" className={`w-[45px] text-[12.500px]! ${white}`}>
              <span className="relative tracking-[-0.5px]">H.Pos<br />Rtn.<span className="absolute top-[1px] left-[6px]"><Ban size={23} /></span></span>
            </Unit>
          </div>
        </div>
        <Split />
        <Machine />
      </div>
    </>
  );
}

const dark = "bg-black text-[#808080]";
const lights: [string, string][] = [
  ["READY", "bg-[#00ff00] text-black"], ["비상정지", dark], ["알람", dark], ["단선", dark], ["접촉", dark], ["자동", "bg-[#ffff00] text-black"],
  ["작업중", "bg-[#00ff00] text-black"], ["M코드 정지", dark], ["작업종료", dark], ["축-회전", "bg-[#ff0000] text-black"], ["정전복귀", dark], ["자동결선중", dark],
];

export default function App() {
  return (
    <div className="relative flex h-[768px] w-[1024px] flex-col overflow-hidden bg-linear-to-b from-[#0b3f9a] via-[#0a5cb8] to-[#1c6fc0] font-['Liberation_Sans','Noto_Sans_CJK_KR',sans-serif] leading-none whitespace-nowrap text-black">
      <div className="mt-[3px] ml-[2px] flex h-[762px] w-[1019px] shrink-0 flex-col overflow-hidden rounded-t-[5px] border border-[#3c444e] bg-[#dce6f0] px-px">
        <TitleBar />
        <div className="flex h-[20px] shrink-0 items-center justify-between border-b border-[#b8b8c8] bg-linear-to-b from-white via-[#dfe3f3] to-[#d9ddf0] pr-[6px] pl-[7px] font-['Open_Sans',sans-serif] text-[12px] text-[#6f6f74]">
          <div className="flex gap-[14px]"><span>File</span><span>View</span><span>Settings</span><span>Help</span></div>
          <span className="tracking-[0.250px]">2022-11-02 PM 06:32:36</span>
        </div>
        <Tabs />
        <div className="flex h-[457px] shrink-0 bg-[#cab797]">
          <LeftColumn />
          <div className="flex flex-col">
            <div className="flex h-[31px] shrink-0 items-start">
              <div className="mt-[3px] ml-px flex h-[27px] w-[328px] items-center justify-center border border-t-[#999] border-l-[#999] border-r-white border-b-white pb-[2px] text-[20px] font-bold tracking-[-0.15px] whitespace-pre">L0015   N00061</div>
              <div className="mt-[6px] ml-[22px] text-[19.5px] tracking-[-0.150px] whitespace-pre text-[#00007f]">279/   292 [389.NC]</div>
            </div>
            <div className="flex">
              <Params />
              <div className="mt-[7px] flex w-[467px] flex-col">
                <ViewTools />
                <PathView />
              </div>
            </div>
          </div>
        </div>
        <Electrical />
        <Remote />
        <div className="flex h-[30px] shrink-0 items-center bg-[#808080]">
          <div className="ml-[6px] h-[15px] w-[15px] shrink-0 rounded-full border border-black bg-[#00ff00]" />
          <div className="ml-[4px] flex gap-[2.200px]">
            {lights.map(([t, c]) => (
              <div key={t} className={`flex h-[21px] w-[80px] shrink-0 items-center justify-center pb-[2px] text-[13px] font-bold tracking-[0.8px] ${c}`}>{t}</div>
            ))}
          </div>
        </div>
      </div>
      <div className="ml-[4px] flex h-[3px] shrink-0 gap-px bg-[#2c6cb0]">
        <div className="w-[134px] bg-[#c4ccd6]" /><div className="w-[56px] bg-white" /><div className="w-[250px] bg-[#c8d4e0]" /><div className="w-[62px] bg-white" /><div className="w-[60px] bg-white" /><div className="w-[248px] bg-[#c8d4e0]" />
      </div>
      <div className="absolute top-[747px] left-[987px] h-[21px] w-[37px] overflow-hidden border border-[#334] bg-linear-to-b from-[#a3bbd6] to-[#c4d6ea] pt-[9px] pl-[6px] font-['Open_Sans',sans-serif] text-[12px]">Log M</div>
    </div>
  );
}
